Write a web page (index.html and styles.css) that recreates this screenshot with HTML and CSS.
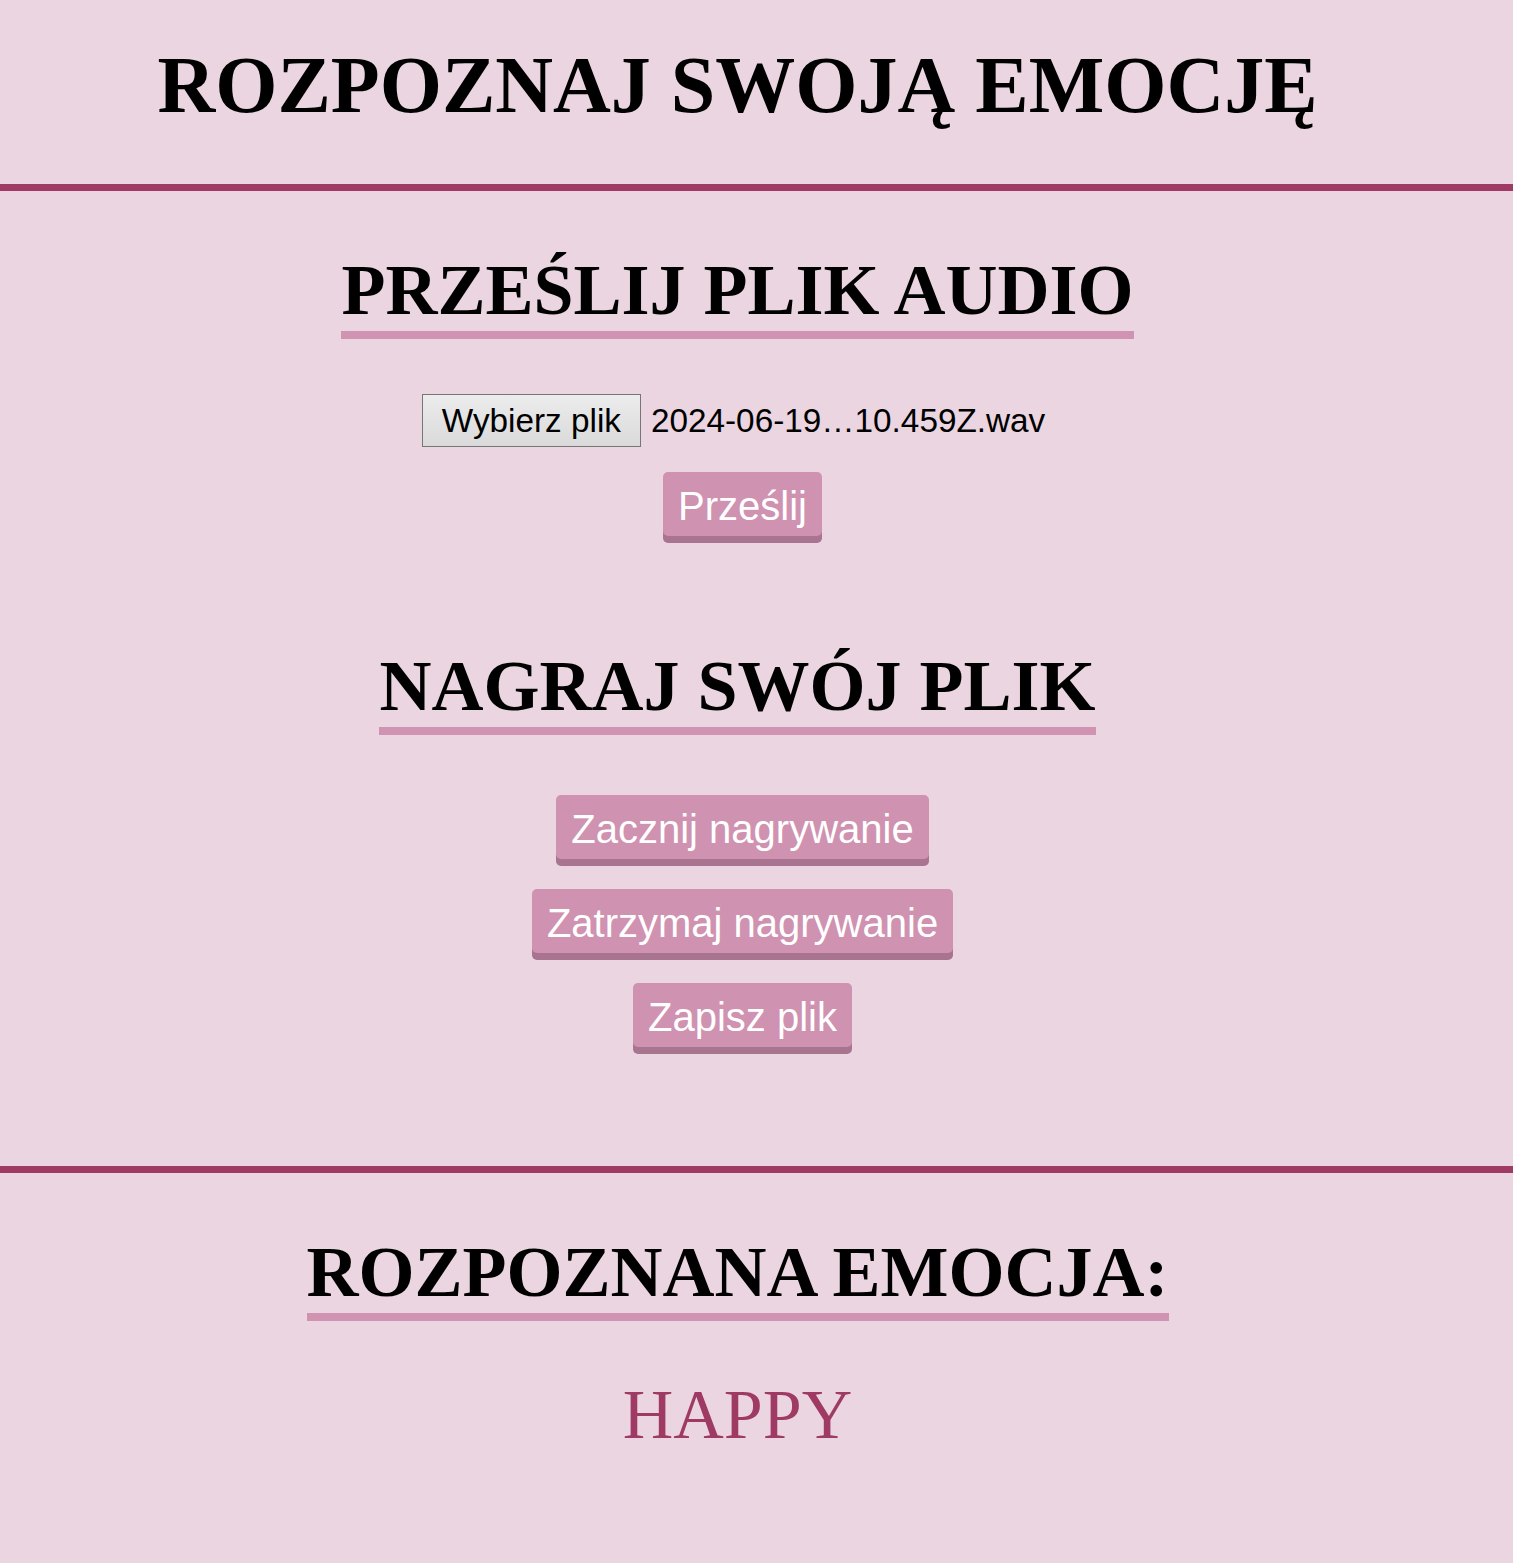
FILE: index.html
```html
<!DOCTYPE html>
<html lang="pl">
<head>
<meta charset="utf-8">
<title>Rozpoznaj swoją emocję</title>
<link rel="stylesheet" href="styles.css">
</head>
<body>
<header class="top">
  <h1 class="title">ROZPOZNAJ SWOJĄ EMOCJĘ</h1>
</header>

<section class="panel panel-upload">
  <div class="head-wrap"><h2 class="heading">PRZEŚLIJ PLIK AUDIO</h2></div>
  <div class="file-row">
    <label class="file">
      <span class="file-btn">Wybierz plik</span>
      <span class="file-name">2024-06-19…10.459Z.wav</span>
    </label>
  </div>
  <div class="btn-row first"><button class="btn">Prześlij</button></div>
</section>

<section class="panel panel-record">
  <div class="head-wrap"><h2 class="heading">NAGRAJ SWÓJ PLIK</h2></div>
  <div class="btn-row first"><button class="btn">Zacznij nagrywanie</button></div>
  <div class="btn-row"><button class="btn">Zatrzymaj nagrywanie</button></div>
  <div class="btn-row"><button class="btn">Zapisz plik</button></div>
</section>

<section class="result">
  <div class="head-wrap"><h2 class="heading">ROZPOZNANA EMOCJA:</h2></div>
  <p class="emotion">HAPPY</p>
</section>
</body>
</html>
```

FILE: styles.css
```css
html, body {
  margin: 0;
  padding: 0;
  background: #ead5e0;
}

body {
  font-family: "Liberation Serif", "Times New Roman", serif;
  color: #000;
  min-height: 1563px;
}

.top {
  padding: 39px 38px 53px 0;
  border-bottom: 7px solid #9e3a64;
  text-align: center;
}

.title {
  margin: 0;
  font-size: 80px;
  line-height: 92px;
  font-weight: 700;
}

.panel {
  padding: 58px 38px 0 0;
  text-align: center;
}

.panel-upload {
  padding-bottom: 109px;
}

.panel-record {
  padding-top: 0;
  padding-bottom: 119px;
  border-bottom: 7px solid #9e3a64;
}

.head-wrap {
  margin: 0;
}

.heading {
  display: inline-block;
  margin: 0;
  font-size: 72px;
  line-height: 82px;
  font-weight: 700;
  border-bottom: 8px solid #d093b1;
}

.file-row {
  margin-top: 55px;
  display: flex;
  justify-content: center;
  padding-right: 8px;
}

.file {
  display: inline-flex;
  align-items: center;
  gap: 10px;
  font-family: "Liberation Sans", Arial, sans-serif;
  font-size: 33.3px;
  color: #000;
}

.file-btn {
  display: inline-block;
  line-height: 37px;
  padding: 7px 19px;
  border: 1px solid #767676;
  background: linear-gradient(#ececec, #dadada);
  color: #000;
}

.file-name {
  line-height: 37px;
}

.btn-row {
  margin-top: 30px;
  padding-left: 10px;
}

.btn-row.first {
  margin-top: 60px;
}

.panel-upload .btn-row.first {
  margin-top: 25px;
}

.btn {
  font-family: "Liberation Sans", Arial, sans-serif;
  font-size: 40px;
  line-height: 46px;
  padding: 11px 15px 7px;
  color: #fff;
  background: #cf92b0;
  border: 0;
  border-radius: 5px;
  box-shadow: 0 7px 0 #a8748f;
  cursor: pointer;
}

.result {
  padding: 58px 38px 0 0;
  text-align: center;
}

.emotion {
  margin: 54px 0 0;
  font-size: 70px;
  line-height: 80px;
  color: #9e3a64;
}
```
